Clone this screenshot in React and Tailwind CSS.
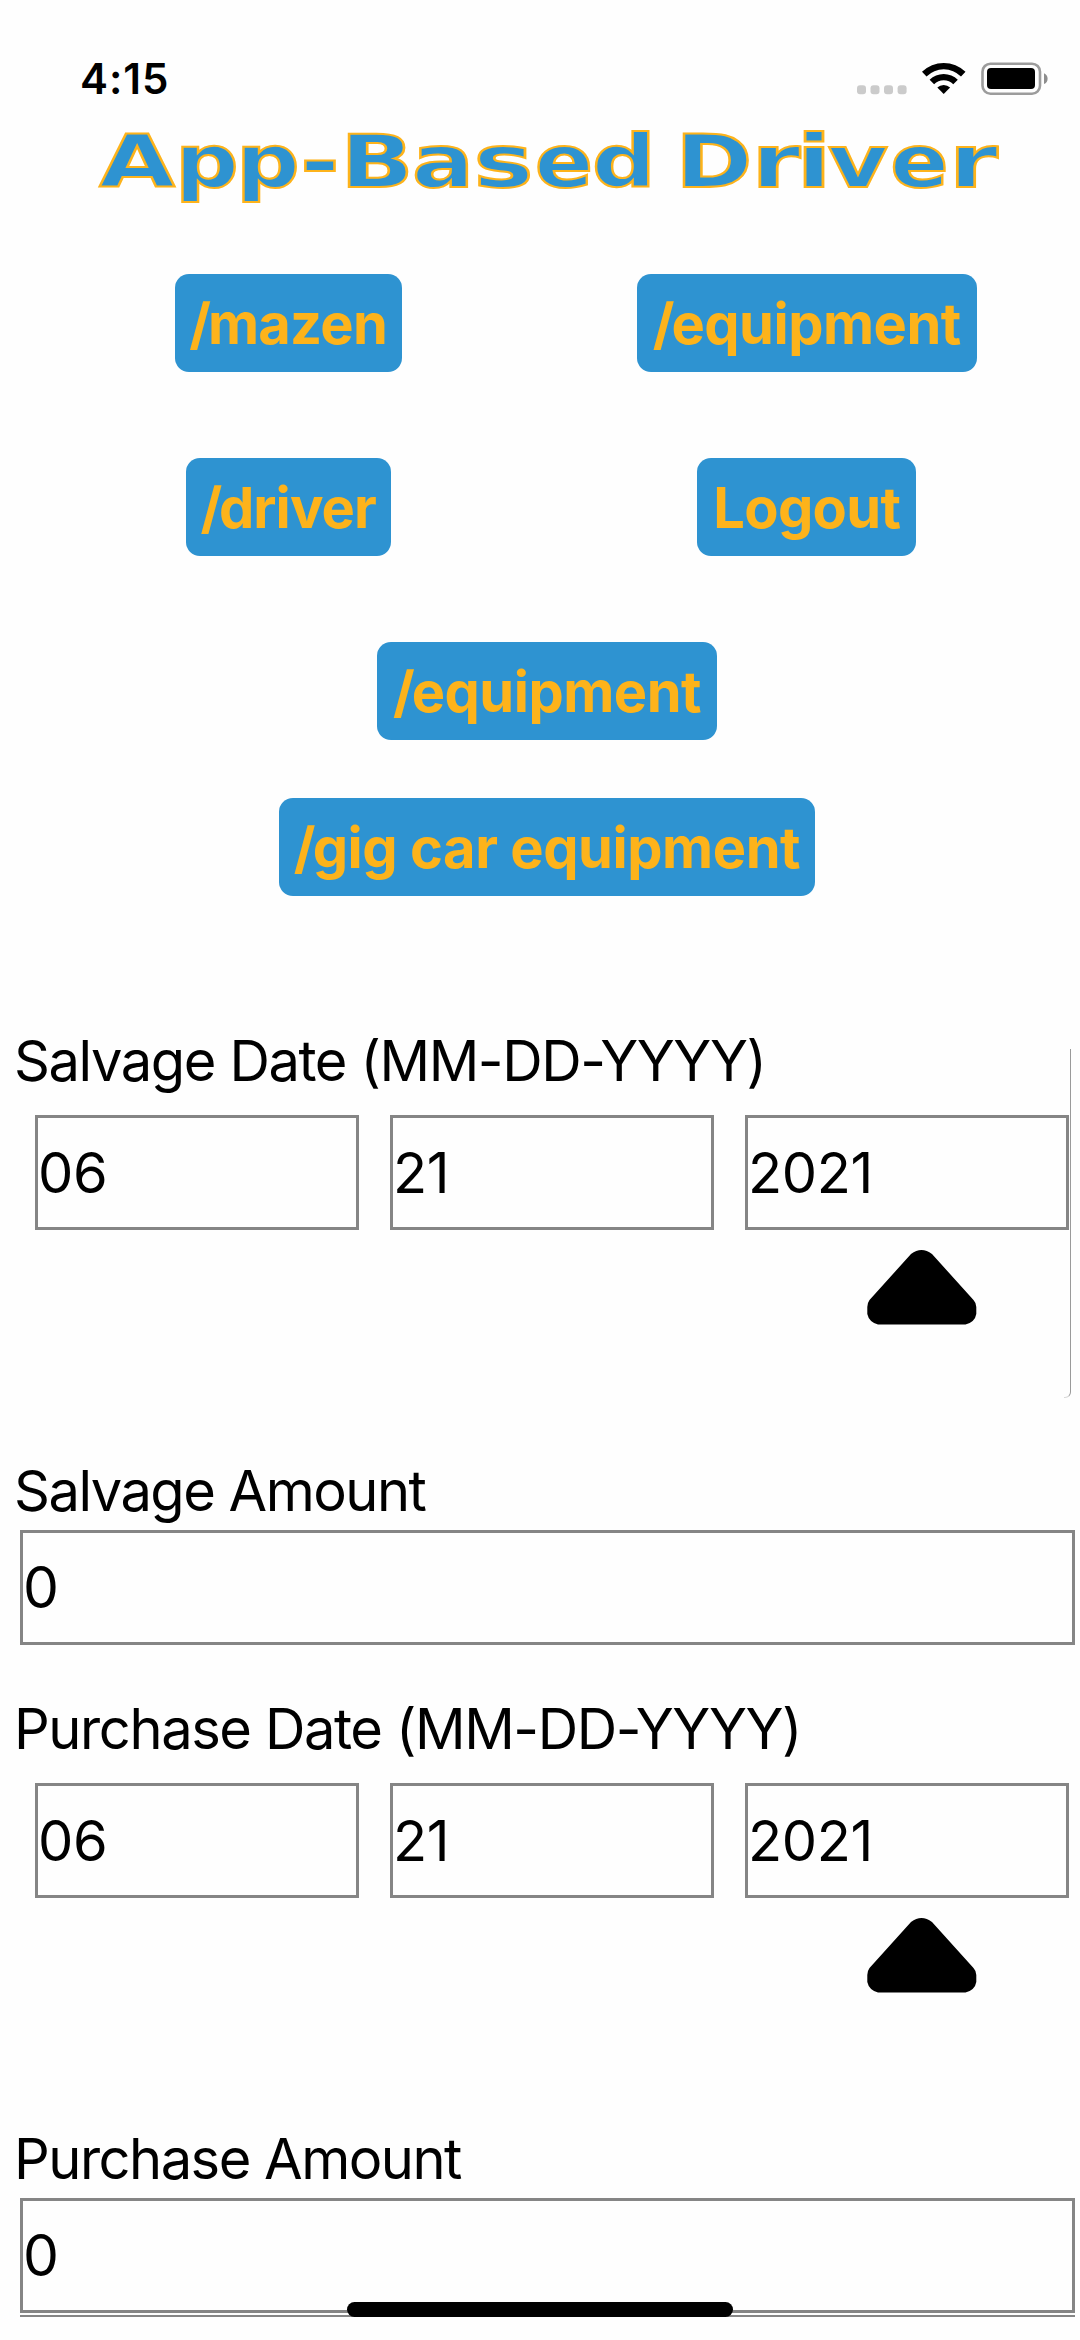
import React from "react";

// Wide display lettering: [glyph, advance in px, horizontal stretch]
const TITLE = [
  ["A", 80, 1.34], ["p", 60, 1.22], ["p", 62, 1.22], ["-", 42, 1.3], ["B", 72, 1.32],
  ["a", 60, 1.26], ["s", 61, 1.38], ["e", 60, 1.18], ["d", 60, 1.22], ["\u00a0", 24, 1],
  ["D", 72, 1.27], ["r", 52, 1.36], ["i", 24, 1.4], ["v", 64, 1.27], ["e", 59, 1.18], ["r", 49, 1.36],
];

function StatusBar() {
  return (
    <div className="flex h-[125px] shrink-0 items-start justify-between pl-[80px] pr-[32px] pt-[57px]">
      <span className="text-[42px] font-semibold leading-[44px] tracking-[1px]">4:15</span>
      <svg width="192" height="34" viewBox="0 0 192 34" className="mt-[5px]">
        <g fill="#cbcbcb">
          <rect x="1" y="23.3" width="9" height="9" rx="3" />
          <rect x="14.5" y="23.3" width="9" height="9" rx="3" />
          <rect x="28" y="23.3" width="9" height="9" rx="3" />
          <rect x="41.6" y="23.3" width="9" height="9" rx="3" />
        </g>
        <path d="M66 9.8A31 31 0 0 1 109.5 9.8L105 14.4A24.5 24.5 0 0 0 70.5 14.4Z" />
        <path d="M73.6 17.7A20 20 0 0 1 101.8 17.7L97.3 22.2A13.5 13.5 0 0 0 78.1 22.2Z" />
        <path d="M81.3 25.5A9.3 9.3 0 0 1 94.1 25.5L87.7 32Z" />
        <rect x="126.5" y="1.7" width="57.5" height="30" rx="8" fill="none" stroke="#9c9c9c" strokeWidth="2.6" />
        <rect x="131" y="6" width="48" height="21" rx="4" />
        <path d="M188 11.3Q191.6 13 191.6 16.7Q191.6 20.4 188 22.1Z" fill="#8d8d8d" />
      </svg>
    </div>
  );
}

function Title() {
  return (
    <h1
      aria-label="App-Based Driver"
      className="flex h-[76px] shrink-0 pl-[97px] font-['DejaVu_Sans'] text-[73px] font-bold leading-[74px] text-[#2e93d1] [-webkit-text-stroke:2px_#fdb31b]"
    >
      {TITLE.map(([glyph, advance, stretch], i) => (
        <span
          key={i}
          className="flex shrink-0 justify-center"
          style={{ width: advance, transform: `scaleX(${stretch})` }}
        >
          {glyph}
        </span>
      ))}
    </h1>
  );
}

function NavButton({ className, slash = true, children }) {
  return (
    <button
      className={`flex h-[98px] shrink-0 items-center justify-center rounded-[14px] bg-[#2e93d1] pt-[2px] text-[56px] font-bold whitespace-nowrap text-[#fdb31b] ${className}`}
    >
      {slash && <span className="mr-[-2.500px]">/</span>}
      <span>{children}</span>
    </button>
  );
}

function DateGroup({ label, children, outlined }) {
  return (
    <section className="relative h-[430px] shrink-0">
      <label className="block pl-[14px] text-[56px] leading-[68px] tracking-[-1.4px] whitespace-nowrap">{label}</label>
      <div className="mt-[20px] flex gap-[31.5px] pl-[35px]">
        {children}
      </div>
      <svg width="110" height="76" viewBox="0 0 110 76" className="mt-[20px] ml-[867px]">
        <path d="M44 4Q54.5-4 65 4L106.500 50Q109.300 53 109.300 57V64Q108 72 98.500 74.600H11Q2 72 0.300 64V57Q0.300 53 2.500 50Z" />
      </svg>
      {outlined && (
        <div className="absolute right-[9px] top-[22px] h-[349px] w-[7px] rounded-br-[6px] border-r border-b border-r-[#9a9a9a] border-b-[#d8d8d8]" />
      )}
    </section>
  );
}

function DateBox({ children }) {
  return (
    <div className="flex h-[115px] w-[323.5px] items-center border-[3px] border-[#858585] pt-px text-[56px] tracking-[-0.400px]">
      {children}
    </div>
  );
}

function Amount({ label }) {
  return (
    <>
      <label className="block pl-[14px] text-[56px] leading-[68px] tracking-[-1.500px] whitespace-nowrap">{label}</label>
      <div className="mt-[5px] ml-5 flex h-[115px] w-[1055px] items-center border-[3px] border-[#858585] pt-px text-[57px]">0</div>
    </>
  );
}

export default function App() {
  return (
    <div className="relative flex h-[2340px] w-[1080px] flex-col overflow-hidden bg-[#fefefe] font-['Inter',sans-serif] text-black">
      <StatusBar />
      <Title />
      <nav className="mt-[72.500px] flex shrink-0 flex-col">
        <div className="mr-[14px] ml-[29px] grid grid-cols-2 justify-items-center gap-y-[86.500px]">
          <NavButton className="w-[227px] tracking-[-0.700px]">mazen</NavButton>
          <NavButton className="w-[340px] tracking-[-0.500px]">equipment</NavButton>
          <NavButton className="w-[205px] tracking-[-0.900px]">driver</NavButton>
          <NavButton className="w-[219px] tracking-[-0.700px]" slash={false}>Logout</NavButton>
        </div>
        <div className="mt-[86px] ml-[14px] flex flex-col items-center gap-[57.500px]">
          <NavButton className="w-[340px] tracking-[-0.500px]">equipment</NavButton>
          <NavButton className="w-[536px] tracking-[-0.450px]">gig car equipment</NavButton>
        </div>
      </nav>
      <main className="mt-[131px] flex flex-col">
        <DateGroup label="Salvage Date (MM-DD-YYYY)" outlined>
          <DateBox>06</DateBox>
          <DateBox>21</DateBox>
          <DateBox>2021</DateBox>
        </DateGroup>
        <Amount label="Salvage Amount" />
        <div className="mt-[50.500px]">
          <DateGroup label="Purchase Date (MM-DD-YYYY)">
            <DateBox>06</DateBox>
            <DateBox>21</DateBox>
            <DateBox>2021</DateBox>
          </DateGroup>
        </div>
        <Amount label="Purchase Amount" />
        <div className="mt-[2px] ml-5 h-[2px] w-[1055px] bg-[#858585]" />
      </main>
      <div className="absolute bottom-[23px] left-[347px] h-[15px] w-[386px] rounded-full bg-black" />
    </div>
  );
}
